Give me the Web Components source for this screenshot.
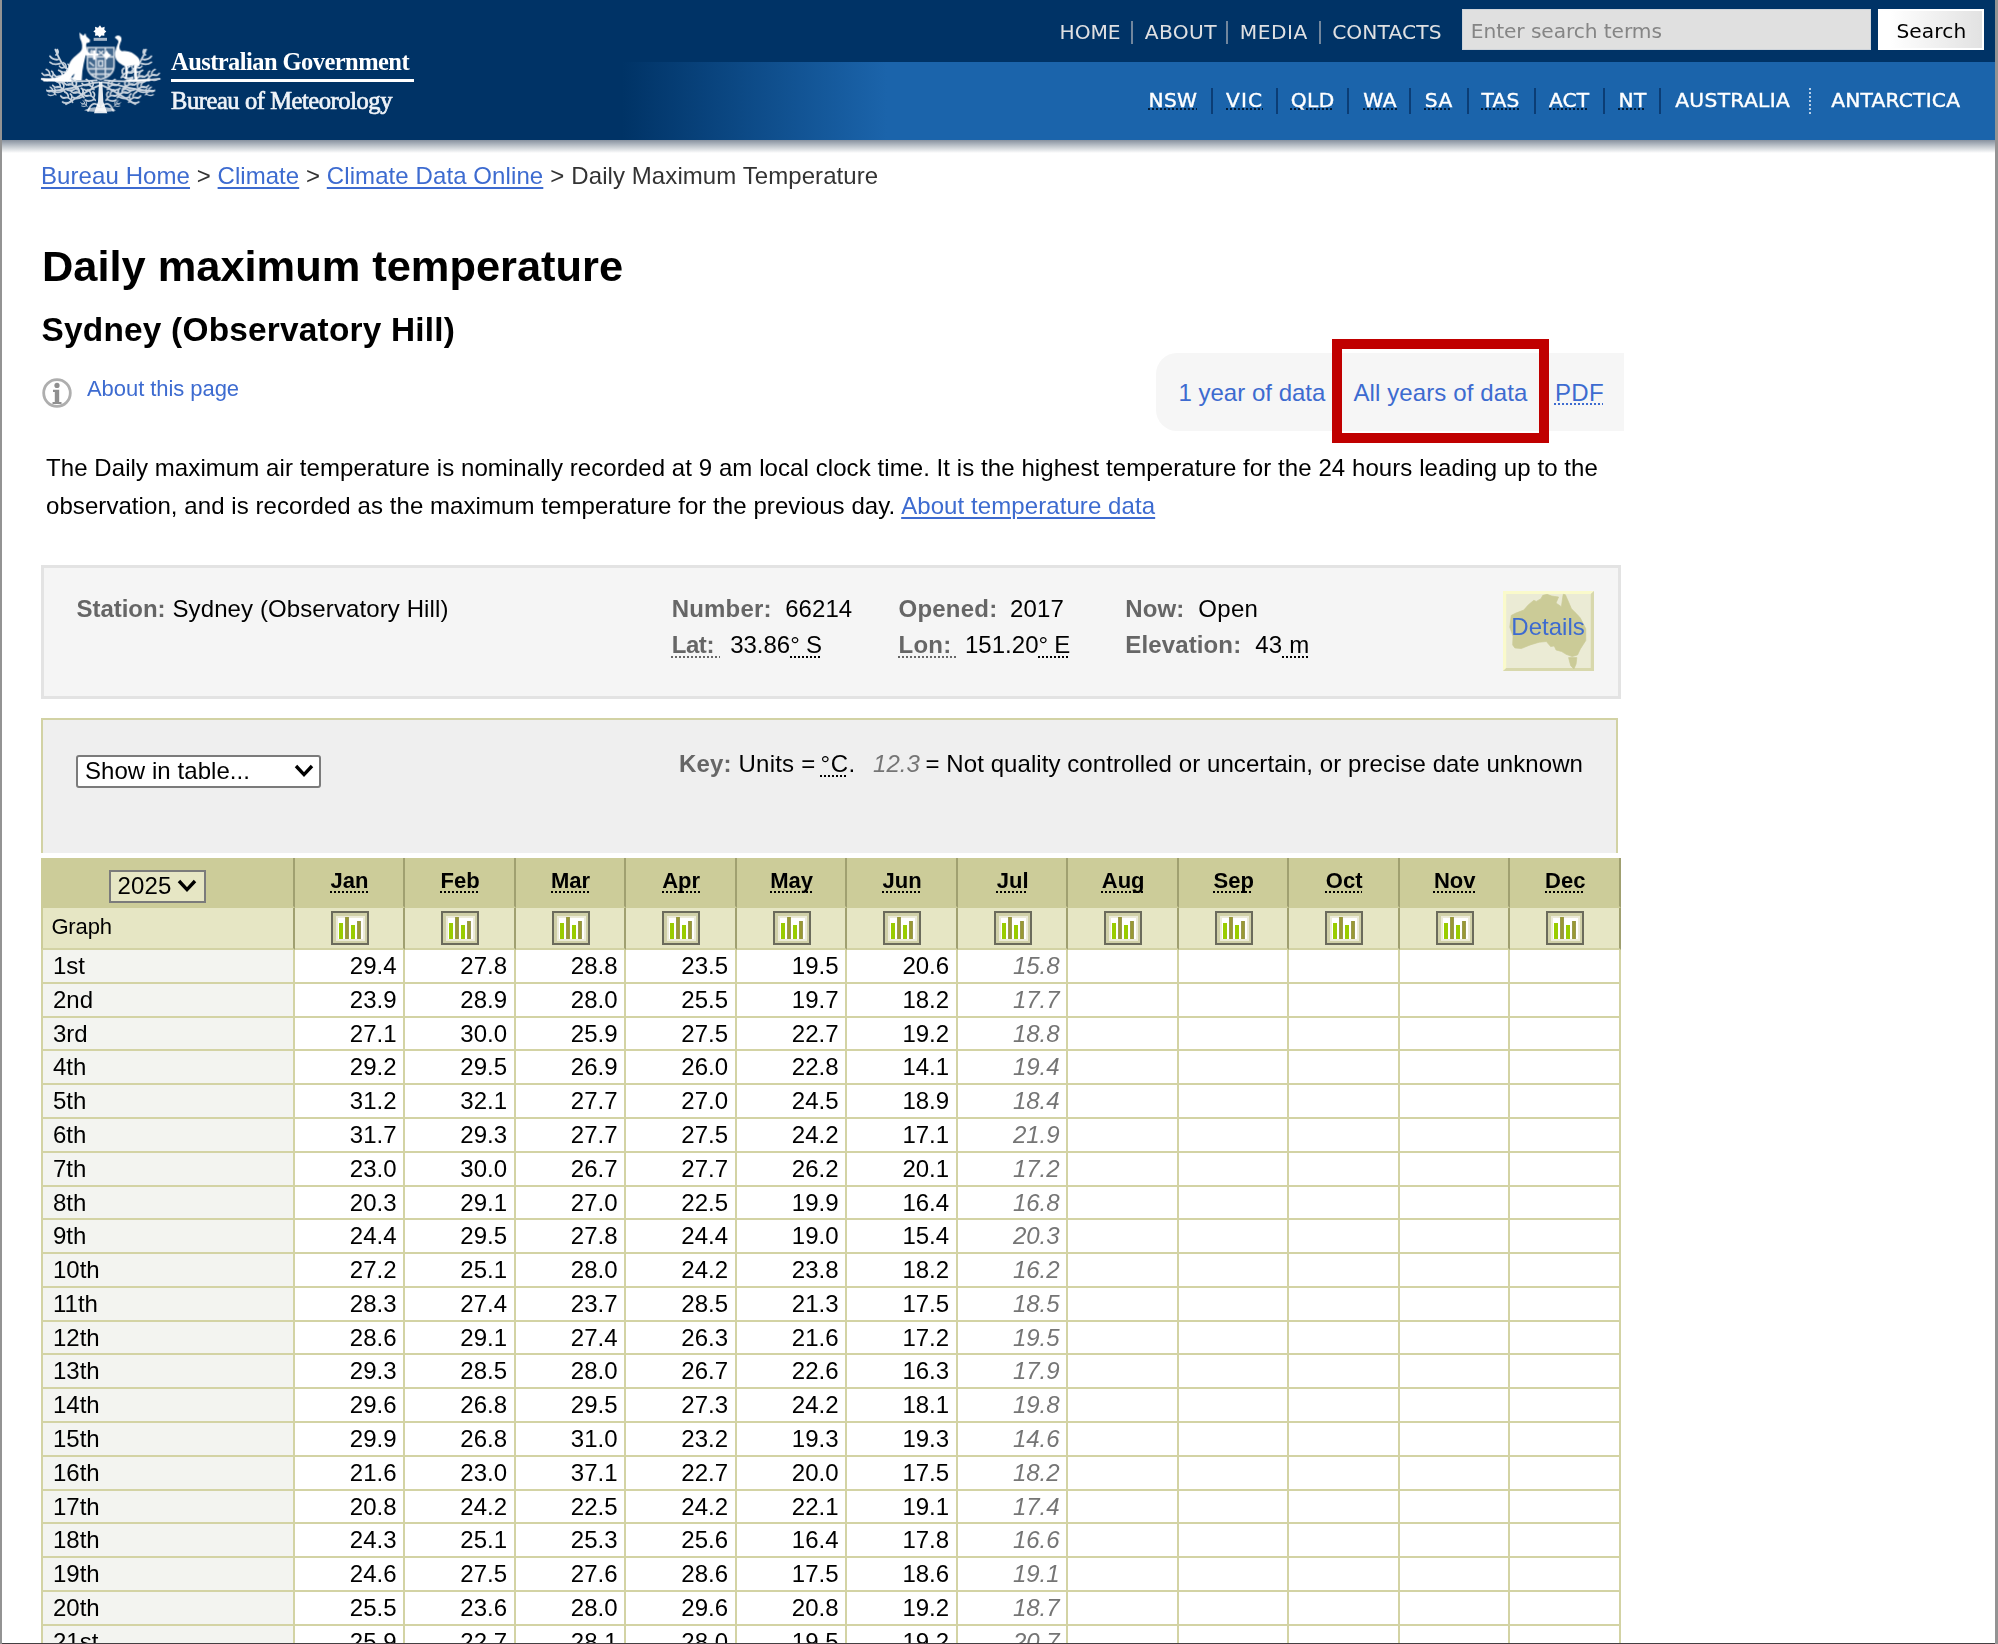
<!DOCTYPE html>
<html lang="en">
<head>
<meta charset="utf-8">
<title>Daily Maximum Temperature - 066214 - Bureau of Meteorology</title>
<style>
html,body{margin:0;padding:0;background:#fff}
body{font-family:"Liberation Sans",Arial,sans-serif;font-size:24px;color:#000;width:1998px;height:1644px;overflow:hidden}
</style>
</head>
<body>
<climate-page></climate-page>
<script>
const define = (name, css, html, init) => customElements.define(name, class extends HTMLElement {
  constructor() {
    super();
    const root = this.attachShadow({ mode: 'open' });
    root.innerHTML = `<style>*{box-sizing:border-box}${css}</style>` + (typeof html === 'function' ? html(this) : html);
    if (init) init.call(this, root);
  }
});
const LINK = '#3d6bd0';
const run = (text, w, ml = 0, cls = '') => `<text-run w="${w}" class="${cls}" style="margin-left:${ml}px">${text}</text-run>`;
const runCss = `.u{text-decoration:underline;text-decoration-thickness:1.6px;text-underline-offset:3px;color:${LINK}}
.d{text-decoration:underline dotted 2.4px;text-underline-offset:3px;text-decoration-skip-ink:none}
.b{font-weight:bold;color:#666}.l{color:${LINK}}.i{font-style:italic;color:#757575}`;

/* Crest and wordmark */
define('gov-crest', `:host{display:block;width:122px;height:89px}svg{display:block;width:122px;height:89px}`, () => {
  const curl = (x, y, s, f) => `<g transform="translate(${x} ${y}) scale(${f * s} ${s})"><path d="M0 0q14-22 32-14M6-8q-8-14 2-20M14-14q0-16 12-20M20-15q14 4 20-6M4-3q18 10 30 2"/></g>`;
  let leaves = '';
  for (const f of [1, -1]) {
    const X = v => 302 + f * v;
    leaves += curl(X(62), 232, 1, f) + curl(X(92), 214, .8, f) + curl(X(100), 244, 1, f) + curl(X(140), 238, .9, f) +
      curl(X(70), 268, 1, f) + curl(X(108), 274, .9, f) + curl(X(134), 284, .7, f) + curl(X(50), 292, 1, f) + curl(X(84), 306, .9, f) +
      curl(X(20), 268, .9, f) + curl(X(16), 300, .9, f) + curl(X(40), 318, .5, f);
    leaves += `<path d="M${X(5)} 246C${X(60)} 250 ${X(80)} 272 ${X(160)} 272M${X(5)} 256C${X(40)} 270 ${X(70)} 292 ${X(104)} 312M${X(4)} 318q${f * 20}-20 ${f * 34} 14M${X(12)} 240q${f * 60} 8 ${f * 165}-4"/>`;
    leaves += `<path d="M${X(98)} 208q${f * 20}-12 ${f * 38}-60M${X(128)} 178q${f * 16} 2 ${f * 24}-10M${X(122)} 190q${f * 18} 6 ${f * 30}-4M${X(134)} 164q${f * -10}-6 ${f * -4}-16"/>`;
  }
  return `<svg viewBox="120 75 366 266" fill="#fff" stroke="none">
  <g fill="none" stroke="#fff" stroke-width="5.4" stroke-linecap="round" opacity=".8">${leaves}</g>
  <path d="M300 75l5 8 9-3-1 9 6 5-6 5 0 8-9-1-5 6-5-6-9 1 1-9-6-4 6-5-1-9 9 3z"/>
  <path d="M281 113h40v9h-40z" opacity=".65"/>
  <path d="M262 142h80v56q0 28-40 40q-40-12-40-40z" opacity=".25"/>
  <g fill="none" stroke="#fff" stroke-width="5" opacity=".75"><path d="M262 142h80v56q0 28-40 40q-40-12-40-40zM262 170h80M288 142v92M316 142v92M270 156h10M275 149v14M296 152l14 12M310 152l-14 12M268 186l14 12M296 182h12v16h-12zM264 206h76M272 222h60"/></g>
  <path d="M314 160l6-9 6 9 8 5-8 5-6 9-6-9-7-5z"/><path d="M279 150h7v10h9v7h-9v12h-7v-12h-9v-7h9z"/>
  <path d="M238 97l12 10 6-8 3 10 11 10-1 7-10 3c-2 14 2 18 4 26l9 6-2 6-13-2-6 26-4 22-2 28h-18l4-28-14 14-10 14h-80l-3-5c44 0 62-6 80-27c4-42 37-44 42-64c2-14-3-24-6-30z"/>
  <path d="M238 206l-2 34h-20l14-34z"/>
  <path d="M344 112q6-8 14-5q8 3 6 14q-5 10-6 18q0 12 8 14c18-3 34 4 46 17c8 8 10 18 5 28q-10-6-22-2q-20 8-38-8q-14-12-12-30q4-18 10-32q0-6-3-7z"/>
  <path d="M372 190l9 4 3 22-4 20h-6l4-20z"/><path d="M402 194h10l-2 14 2 30h-7l-3-30z"/>
  <path d="M130 237h84v7h-84zM380 237h70v6h-70z"/>
  <path d="M297 245h10l3 60 12 34h-40l12-34z" opacity=".9"/>
  <path d="M252 330q28-14 48-6q22-8 48 6-28 8-48 2-20 6-48-2z" opacity=".65"/>
  </svg>`;
});

define('gov-logo', `:host{display:flex;padding:25px 0 0 37.5px;font-family:"Liberation Serif",serif;color:#fff;width:440px;height:140px}
.w{margin-left:9.5px;padding-top:22px}.a{font-size:24.5px;line-height:30px;font-weight:bold;height:32px}.r{width:243px;height:2.5px;background:#fff}
.c{font-size:24.5px;line-height:30px;margin-top:4px;-webkit-text-stroke:.7px #eef3f8;color:#eef3f8}`,
`<gov-crest></gov-crest><div class="w"><div class="a">${run('Australian Government', 238)}</div><div class="r"></div><div class="c">${run('Bureau of Meteorology', 221)}</div></div>`);

/* Row of separated links; items are [text, width, cell width, left padding] */
const cells = items => items.map(([t, w, c, p, k = '']) => `<div class="cell ${k ? '' : 'plain'}" style="width:${c}px;padding-left:${p}px">${run(t, w, 0, k)}</div>`).join('');
define('top-links', `:host{display:flex;color:#dfe0e2;padding-top:20.5px;height:62px}.cell{height:23px;line-height:23px;border-right:2px solid #71869d}.cell:last-child{border:0}`,
  cells([['HOME', 61, 85.3, 12], ['ABOUT', 72, 95.4, 12], ['MEDIA', 68, 92.4, 11.6], ['CONTACTS', 109.5, 141.2, 11.5]]));
define('state-links', `:host{display:flex;color:#fff;padding:25.5px 0 0;height:78px}
.cell{height:26px;line-height:24px;border-right:2px solid #0b3d75}.cell.plain{border-right:2px dotted #b9d0e8}.cell:last-child{border:0}
text-run{-webkit-text-stroke:.4px #fff}.d{text-decoration:underline dotted 2.2px #001a36;text-underline-offset:2px;text-decoration-skip-ink:none}`,
  cells([['NSW', 48.5, 77.5, 13.4, 'd'], ['VIC', 37, 65, 13.4, 'd'], ['QLD', 44, 71.5, 13, 'd'], ['WA', 34, 62, 14, 'd'], ['SA', 28, 57.3, 13.5, 'd'], ['TAS', 38, 67, 13, 'd'], ['ACT', 40, 69.7, 13.5, 'd'], ['NT', 28, 56, 13.4, 'd'], ['AUSTRALIA', 115, 149.5, 14], ['ANTARCTICA', 129, 184.3, 20.5]]));
define('search-form', `:host{display:flex;padding-top:9.3px;height:62px;gap:7.4px}
.q{width:409.2px;height:40.4px;background:#e0e0e0;border:1px solid #cfd4da;color:#858585;padding:2px 0 0 8px;line-height:39.5px}
.s{width:105.6px;height:40.4px;background:linear-gradient(90deg,#fff 10%,#e2e2e2);border:2px solid #fff;color:#000;padding:2px 0 0 16px;line-height:37.5px}`,
  `<div class="q">${run('Enter search terms', 191)}</div><div class="s">${run('Search', 70)}</div>`);
define('site-header', `:host{display:flex;height:140px;justify-content:space-between;font-family:"DejaVu Sans",Verdana,sans-serif;font-size:20.2px;
background:linear-gradient(#036,#036) 0 0/100% 62px no-repeat,linear-gradient(90deg,#036 620px,#1b64ab 885px)}
.r{display:flex;flex-direction:column;align-items:flex-end}.t{display:flex;padding-right:11px}`,
  `<gov-logo></gov-logo><div class="r"><div class="t"><top-links></top-links><search-form></search-form></div><state-links></state-links></div>`);

define('bread-crumbs', `:host{display:block;line-height:30px;color:#333;white-space:pre}${runCss}`,
  `${run('Bureau Home', 149, 0, 'u')}${run('&gt;', 14, 6.8)}${run('Climate', 81.6, 6.8, 'u')}${run('&gt;', 14, 6.8)}${run('Climate Data Online', 216.5, 6.8, 'u')}${run('&gt;', 14, 7)}${run('Daily Maximum Temperature', 307, 7)}`);

define('info-icon', `:host{display:block;width:30px;height:30px}svg{display:block}`,
  `<svg width="30" height="30" viewBox="0 0 30 30"><circle cx="15" cy="15" r="13.3" fill="#fff" stroke="#aeaeae" stroke-width="2.8"/><circle cx="15" cy="7.4" r="2.6" fill="#8f8f8f"/><path d="M11 11.7h6.2v12.4h2.3v2h-9v-2h2.3v-10.2h-1.8z" fill="#8f8f8f"/></svg>`);
define('page-tools', `:host{display:flex;justify-content:space-between;height:78px}${runCss}
.about{display:flex;padding:24.6px 0 0 1px;font-size:22px}.about div{line-height:30px;margin:-4px 0 0 15px}
.tabs{position:relative;width:467.6px;height:78px;background:#f6f6f6;border-radius:21px 0 0 21px;padding:25.2px 0 0 22px;line-height:30px;white-space:nowrap}
.tabs .d{text-decoration-thickness:2.4px;text-underline-offset:2px}
.box{position:absolute;left:175.6px;top:-14.3px;width:217px;height:104px;border:10px solid #c00000}`,
  `<div class="about"><info-icon></info-icon><div>${run('About this page', 152, 0, 'l')}</div></div>
<div class="tabs">${run('1 year of data', 147, 0, 'l')}${run('All years of data', 174, 28, 'l')}${run('PDF', 49, 27.5, 'l d')}<div class="box"></div></div>`);

define('au-details', `:host{display:grid;width:91px;height:80px}svg,div{grid-area:1/1}div{padding:20.5px 0 0 8px;line-height:30px;color:${LINK}}`,
  `<svg width="91" height="80" viewBox="1129 127 254 239" preserveAspectRatio="none"><path fill="#ebebd5" d="M1129 127h254v239h-254z"/><path d="M1129 127h254l-9 9h-236v221l-9 9z" fill="#fafacb"/><path d="M1383 127v239h-254l9-9h236v-221z" fill="#d8d8ac"/>
<path fill="#cbcb97" stroke="#cbcb97" stroke-width="2" stroke-linejoin="round" d="M1152 200L1165 193 1187 184 1200 168 1215 155 1222 158 1235 150 1240 140 1252 137 1265 142 1284 145 1277 163 1292 174 1297 137 1303 138 1312 160 1320 180 1335 196 1345 208 1360 240 1360 275 1345 300 1337 318 1322 323 1305 316 1293 308 1277 303 1272 291 1262 293 1250 278 1230 280 1205 288 1180 299 1162 297 1156 288 1157 262 1148 235zM1312 326L1335 326 1333 345 1327 360 1318 350z"/></svg><div>${run('Details', 73.5)}</div>`);
define('station-panel', `:host{display:flex;height:133.7px;width:1580px;border:3px solid #e3e3e3;background:#f5f5f5;line-height:35.3px;white-space:nowrap;padding-top:23px}${runCss}
.n{flex:none;width:627.7px;padding-left:32.5px}.c{flex:none;width:226.8px}.m{flex:none;width:378px}.d{text-underline-offset:4px}`,
  `<div class="n">${run('Station:', 89, 0, 'b')}${run('Sydney (Observatory Hill)', 276, 7)}</div>
<div class="c"><div>${run('Number:', 100, 0, 'b')}${run('66214', 67, 13.5)}</div><div>${run('Lat:&nbsp;', 48.5, 0, 'b d')}${run('33.86', 60, 10)}${run('°&nbsp;S', 31.5, 0, 'd')}</div></div>
<div class="c"><div>${run('Opened:', 99, 0, 'b')}${run('2017', 54, 12.5)}</div><div>${run('Lon:&nbsp;', 60, 0, 'b d')}${run('151.20', 73.5, 6.5)}${run('°&nbsp;E', 31.5, 0, 'd')}</div></div>
<div class="m"><div>${run('Now:', 59, 0, 'b')}${run('Open', 60, 14)}</div><div>${run('Elevation:', 116, 0, 'b')}${run('43', 27, 14)}${run('&nbsp;m', 27.5, 0, 'd')}</div></div><au-details></au-details>`);

define('drop-down', `:host{display:flex;align-items:center;border:2px solid #7b7b7b;background:#fff;white-space:nowrap}svg{display:block}`,
  `<slot></slot><svg width="20" height="14" viewBox="0 0 20 14"><path d="M2 2l8 8.6L18 2" fill="none" stroke="#000" stroke-width="3.4"/></svg>`);
define('key-panel', `:host{display:flex;height:134.8px;width:1577px;border:2px solid #d2d2a4;border-bottom:0;background:#efefef;white-space:nowrap}${runCss}
drop-down{width:244.5px;height:33.5px;margin:34.4px 0 0 33px;border-radius:3px;padding-left:7px;gap:43.5px;line-height:30px}
.k{margin:29px 0 0 358.5px;line-height:30px}.i{color:#757575}`,
  `<drop-down>${run('Show in table...', 165)}</drop-down><div class="k">${run('Key:', 52.5, 0, 'b')}${run('Units =', 77, 7)}${run('°C', 28, 5, 'd')}${run('.', 6.5)}${run('12.3', 47, 18, 'i')}${run('= Not quality controlled or uncertain, or precise date unknown', 657.5, 5.5)}</div>`);

define('graph-icon', `:host{display:block;width:38px;height:34px}svg{display:block}`,
  `<svg width="38" height="34" viewBox="0 0 38 34"><path fill="#6b6b5c" d="M0 0h38v34H0z"/><path fill="#d0d0a8" d="M2 2h34v30H2z"/><path fill="#ecebd8" d="M5 5h29v25H5z"/><path fill="#fff" d="M7 7h25v21H7z"/><path fill="#9c0" d="M8 12h4v16H8zM20 14h4v14h-4z"/><path fill="#996" d="M14 6h4v22h-4zM26 10h4v18h-4z"/><path fill="#993" d="M14.6 6h2.8v22h-2.8zM26.6 10h2.8v18h-2.8z"/></svg>`);

/* Temperature table */
const months = 'Jan Feb Mar Apr May Jun Jul Aug Sep Oct Nov Dec'.split(' ');
const data = `29.4 27.8 28.8 23.5 19.5 20.6 15.8|23.9 28.9 28.0 25.5 19.7 18.2 17.7|27.1 30.0 25.9 27.5 22.7 19.2 18.8|29.2 29.5 26.9 26.0 22.8 14.1 19.4|31.2 32.1 27.7 27.0 24.5 18.9 18.4|31.7 29.3 27.7 27.5 24.2 17.1 21.9|23.0 30.0 26.7 27.7 26.2 20.1 17.2|20.3 29.1 27.0 22.5 19.9 16.4 16.8|24.4 29.5 27.8 24.4 19.0 15.4 20.3|27.2 25.1 28.0 24.2 23.8 18.2 16.2|28.3 27.4 23.7 28.5 21.3 17.5 18.5|28.6 29.1 27.4 26.3 21.6 17.2 19.5|29.3 28.5 28.0 26.7 22.6 16.3 17.9|29.6 26.8 29.5 27.3 24.2 18.1 19.8|29.9 26.8 31.0 23.2 19.3 19.3 14.6|21.6 23.0 37.1 22.7 20.0 17.5 18.2|20.8 24.2 22.5 24.2 22.1 19.1 17.4|24.3 25.1 25.3 25.6 16.4 17.8 16.6|24.6 27.5 27.6 28.6 17.5 18.6 19.1|25.5 23.6 28.0 29.6 20.8 19.2 18.7|25.9 22.7 28.1 28.0 19.5 19.2 20.7`.split('|').map(r => r.split(' '));
const ord = n => n + (n % 100 > 10 && n % 100 < 14 ? 'th' : ['th', 'st', 'nd', 'rd'][n % 10] || 'th');
define('temp-table', `:host{display:block;width:1580px}
.row{display:grid;grid-template-columns:253.6px repeat(12,110.53px);grid-template-rows:100%;height:33.8px;line-height:32px}
.row>*{border-right:2px solid #d3d3a4;border-bottom:2px solid #d3d3a4;text-align:right;padding-right:6.6px;min-height:0}
.row>:first-child{background:#f3f4f0;border-left:2px solid #d3d3a4;text-align:left;padding-left:10px}
.row>:nth-child(8):not(.mon){font-style:italic;color:#757575}
.head{height:49.4px;background:#cc9}.head>*,.graph>*{border-right-color:#a0a070!important;padding:0!important;display:flex;justify-content:center}
.head>*{border-bottom:2px solid #cc9}
.head>:first-child,.graph>:first-child{background:none;border-left-color:#cc9}
.mon{font-weight:bold;font-size:22px;line-height:30px;padding:8px 0 0 1.4px!important}
abbr{text-decoration:underline dotted 2.2px;text-underline-offset:3px;text-decoration-skip-ink:none}
.graph{height:42.4px;background:#e6e6c4}.graph>:first-child{justify-content:flex-start;font-size:22px;line-height:37.5px;padding-left:8.4px!important}
graph-icon{margin:3px 0 0 1.6px}
drop-down{width:97px;height:33px;background:#e6e6c4;margin:11.5px 0 0 -21.4px;padding-left:7px;gap:5.4px;line-height:30px}`,
  `<div class="row head"><div><drop-down>${run('2025', 54)}</drop-down></div>${months.map(m => `<div class="mon"><abbr>${m}</abbr></div>`).join('')}</div>
<div class="row graph"><div>${run('Graph', 60.5, 0)}</div>${months.map(() => '<div><graph-icon></graph-icon></div>').join('')}</div>
${data.map((r, i) => `<div class="row"><div>${ord(i + 1)}</div>${months.map((_, j) => `<div>${r[j] || ''}</div>`).join('')}</div>`).join('')}`);

define('climate-page', `:host{display:block;height:1644px;overflow:hidden;border:solid #939393;border-width:0 3px 0 2px}
.all{height:1642.5px;overflow:hidden}.foot{height:2px;background:#443f42;margin:0 -3px 0 -2px}
.sh{height:13px;background:linear-gradient(#87919f,#c3c9cf 50%,#f4f5f6 92%,#fff)}
main{display:flex;flex-direction:column;padding:8.4px 0 0 39px;width:1622px}
h1{font-size:43.4px;line-height:50px;margin:49.6px 0 0 1px}h2{font-size:33.4px;line-height:36px;margin:21.2px 0 0 .6px}
page-tools{margin-top:5.1px;width:1583px}p{margin:18.1px 0 0 5px;line-height:38px;white-space:nowrap}
station-panel{margin-top:40px}key-panel{margin-top:19.3px}temp-table{margin-top:5px}${runCss}`,
  `<div class="all"><site-header></site-header><div class="sh"></div><main>
<bread-crumbs></bread-crumbs><h1>${run('Daily maximum temperature', 581)}</h1><h2>${run('Sydney (Observatory Hill)', 413.5)}</h2>
<page-tools></page-tools>
<p>${run('The Daily maximum air temperature is nominally recorded at 9 am local clock time. It is the highest temperature for the 24 hours leading up to the', 1552)}<br>${run('observation, and is recorded as the maximum temperature for the previous day.', 849.3)} ${run('About temperature data', 254, -.8, 'u')}</p>
<station-panel></station-panel><key-panel></key-panel><temp-table></temp-table></main></div><div class="foot"></div>`);

/* Inline run whose tracking is set so that it takes the width in its "w" attribute */
customElements.define('text-run', class extends HTMLElement {
  constructor() {
    super();
    this.attachShadow({ mode: 'open' }).innerHTML = '<style>:host{display:inline;white-space:nowrap}</style><slot></slot>';
  }
  connectedCallback() {
    const w = parseFloat(this.getAttribute('w')), n = this.textContent.length;
    if (w && n) this.style.letterSpacing = ((w - this.getBoundingClientRect().width) / n).toFixed(3) + 'px';
  }
});
</script>
</body>
</html>
